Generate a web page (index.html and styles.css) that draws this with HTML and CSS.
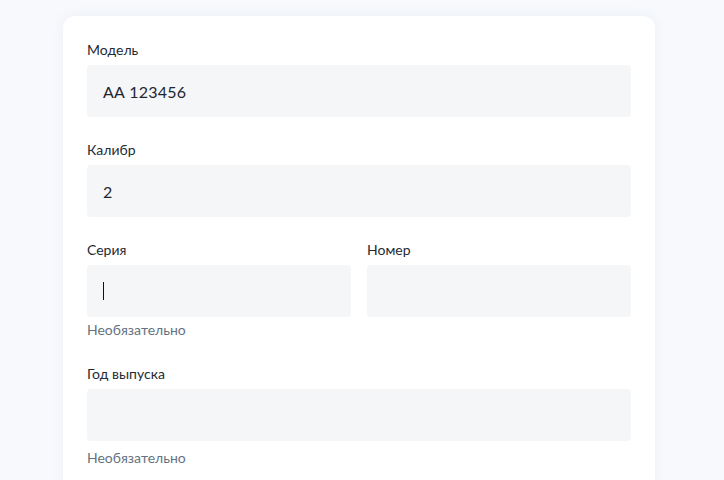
FILE: index.html
```html
<!DOCTYPE html>
<html lang="ru">
<head>
<meta charset="utf-8">
<link rel="stylesheet" href="styles.css">
</head>
<body>
<div class="page">
  <form class="card">
    <div class="field">
      <label class="label">Модель</label>
      <div class="input">АА 123456</div>
    </div>
    <div class="field">
      <label class="label">Калибр</label>
      <div class="input">2</div>
    </div>
    <div class="row">
      <div class="field">
        <label class="label">Серия</label>
        <div class="input"><span class="caret"></span></div>
        <div class="hint">Необязательно</div>
      </div>
      <div class="field">
        <label class="label">Номер</label>
        <div class="input"></div>
      </div>
    </div>
    <div class="field field-last">
      <label class="label">Год выпуска</label>
      <div class="input"></div>
      <div class="hint hint-wide">Необязательно</div>
    </div>
  </form>
</div>
</body>
</html>
```
FILE: styles.css
```css
* { box-sizing: border-box; }
html, body { margin: 0; height: 100%; }
body {
  background: #f7f9fc;
  font-family: Lato, "Noto Sans", sans-serif;
  overflow: hidden;
}
.page {
  padding: 16px 0 0 63px;
  height: 480px;
  overflow: hidden;
}
.card {
  width: 592px;
  min-height: 520px;
  background: #fff;
  border-radius: 12px;
  box-shadow: 0 0 12px rgba(160, 175, 200, 0.12);
  padding: 24px 24px;
  display: flex;
  flex-direction: column;
  gap: 23px;
}
.row {
  display: flex;
  gap: 16px;
  align-items: flex-start;
}
.row .field { flex: 1; }
.field {
  display: flex;
  flex-direction: column;
}
.field-last { margin-top: 1px; }
.label {
  font-size: 14px;
  line-height: 20px;
  color: #232b33;
  margin-bottom: 5px;
}
.input {
  height: 52px;
  background: #f5f6f8;
  border-radius: 4px;
  padding: 0 16px;
  display: flex;
  align-items: center;
  font-size: 16px;
  color: #1e2730;
  letter-spacing: 0.2px;
}
.caret {
  display: block;
  width: 1px;
  height: 18px;
  background: #111;
}
.hint {
  margin-top: 3px;
  font-size: 14px;
  line-height: 20px;
  color: #66727f;
}
.hint-wide { margin-top: 7px; }
```
